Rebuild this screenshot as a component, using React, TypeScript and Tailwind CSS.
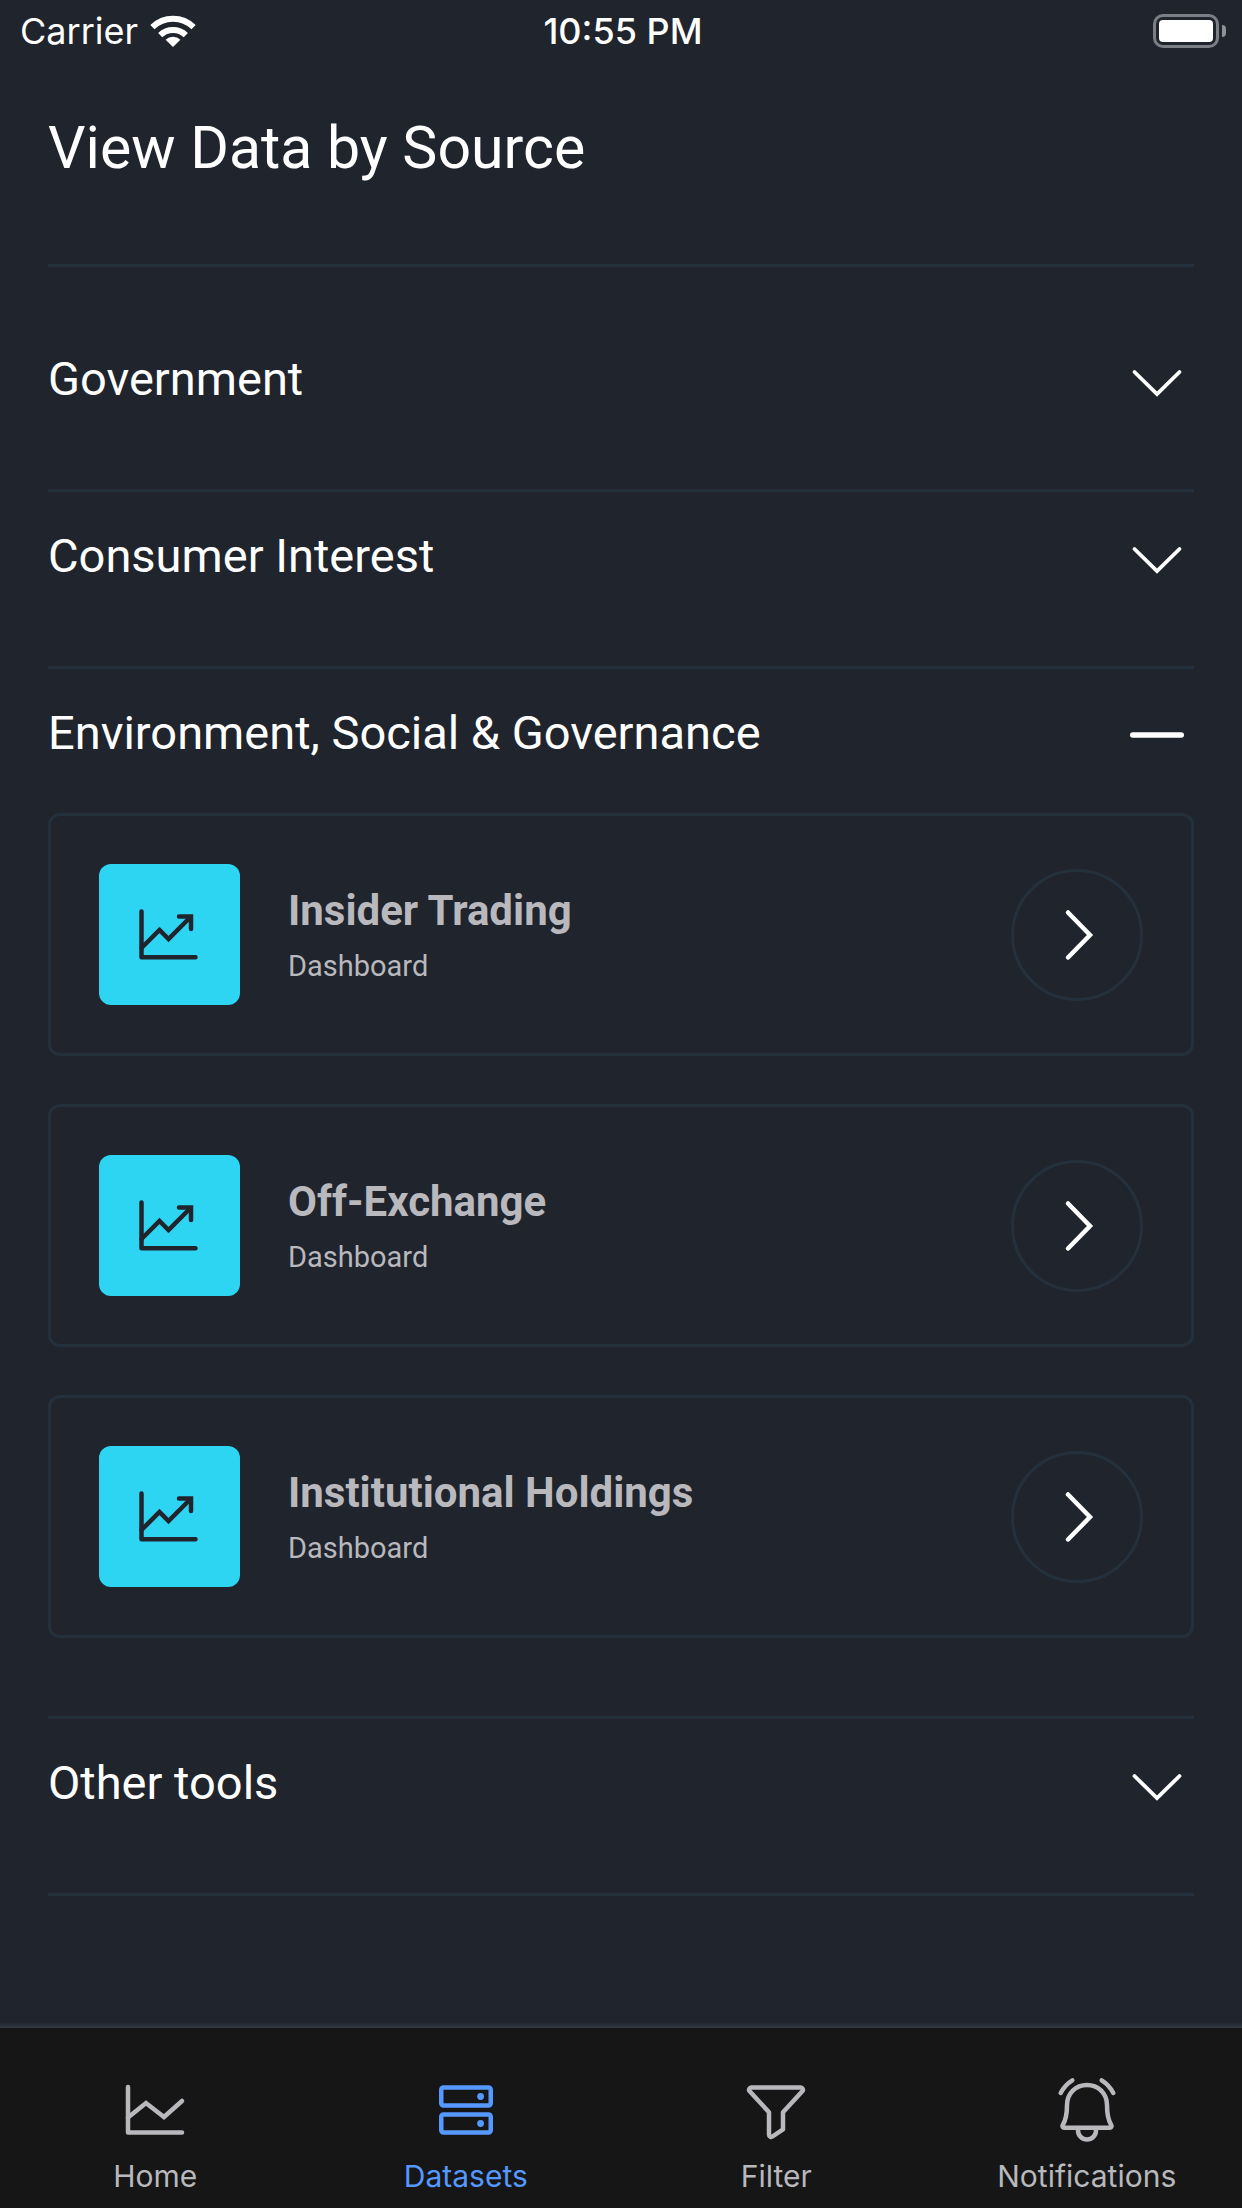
import React, { useState } from "react";
import clsx from "clsx";

type Source = {
	title: string;
	items: string[];
};

const sources: Source[] = [
	{ title: "Government", items: [] },
	{ title: "Consumer Interest", items: [] },
	{
		title: "Environment, Social & Governance",
		items: ["Insider Trading", "Off-Exchange", "Institutional Holdings"],
	},
	{ title: "Other tools", items: [] },
];

function Icon({
	children,
	className,
}: {
	children: React.ReactNode;
	className?: string;
}) {
	return (
		<svg
			viewBox="0 0 72 72"
			className={clsx("size-[72px] shrink-0", className)}
			fill="none"
			stroke="currentColor"
			strokeWidth={4.5}
			strokeLinecap="round"
			strokeLinejoin="round"
			aria-hidden="true"
		>
			{children}
		</svg>
	);
}

const tabs = [
	{
		label: "Home",
		icon: (
			<Icon>
				<path d="M9 13V58.5H63" />
				<path d="M9 43.5L27 29L45 43L63 27" strokeLinejoin="miter" />
			</Icon>
		),
	},
	{
		label: "Datasets",
		icon: (
			<Icon>
				<rect x="11.25" y="13.5" width="49.5" height="18" rx="2.25" />
				<rect x="11.25" y="40.5" width="49.5" height="18" rx="2.25" />
				<circle cx="50.6" cy="22.5" r="3.4" fill="currentColor" stroke="none" />
				<circle cx="50.6" cy="49.5" r="3.4" fill="currentColor" stroke="none" />
			</Icon>
		),
	},
	{
		label: "Filter",
		icon: (
			<Icon>
				<path d="M11.4 13.5H60.6A2.25 2.25 0 0 1 62.3 17.3L43 38.2V55.4L32.5 62.5A2.25 2.25 0 0 1 29 60.7V38.2L9.7 17.3A2.25 2.25 0 0 1 11.4 13.5Z" />
			</Icon>
		),
	},
	{
		label: "Notifications",
		icon: (
			<Icon>
				<path d="M16 31C16 19.5 24.8 11 36 11S56 19.5 56 31C56 42 58 47.5 60.3 51.2A1.7 1.7 0 0 1 58.8 53.8H13.2A1.7 1.7 0 0 1 11.7 51.2C14 47.5 16 42 16 31Z" />
				<path d="M27 54V56.5A9 9 0 0 0 45 56.5V54" />
				<path d="M9.7 19C12.3 13.8 16.3 9.4 21.3 6.3" />
				<path d="M62.3 19C59.7 13.8 55.7 9.4 50.7 6.3" />
			</Icon>
		),
	},
];

function StatusBar() {
	return (
		<div className="grid h-[60px] grid-cols-3 items-center pt-0.5 pr-4 pl-5 font-['Inter',sans-serif] text-[36px] leading-[58px]">
			<div className="flex items-center gap-3">
				<span>Carrier</span>
				<svg
					viewBox="0 0 46 32"
					className="h-8 w-[46px]"
					fill="none"
					stroke="currentColor"
					strokeWidth={6}
					aria-hidden="true"
				>
					<path d="M2.4 12.2A29.5 29.5 0 0 1 43.6 12.2" />
					<path d="M10.2 20.2A18.5 18.5 0 0 1 35.8 20.2" />
					<path
						d="M23 32L15.6 24.8A10.6 10.6 0 0 1 30.4 24.8Z"
						fill="currentColor"
						stroke="none"
					/>
				</svg>
			</div>
			<span className="text-center font-medium">10:55 PM</span>
			<div className="flex items-center justify-end gap-[3px]">
				<div className="h-[34px] w-[66px] rounded-[10px] border-[3px] border-[#7b7e84] p-[3px]">
					<div className="h-full rounded-[4px] bg-white" />
				</div>
				<div className="h-3 w-1 rounded-r-full bg-[#8f9196]" />
			</div>
		</div>
	);
}

function SourceCard({ name }: { name: string }) {
	return (
		<a
			href="#dashboard"
			className="flex items-center gap-12 rounded-xl border-[3px] border-[#24303c] p-12 text-[#b8b8bd]"
		>
			<div className="flex size-[141px] items-center justify-center rounded-xl bg-[#2dd5f3] text-[#20242d]">
				<Icon>
					<path d="M7.5 12.5V58.3H61.5" />
					<path d="M7.5 49L25.5 31L34.5 40L56 18.5" strokeLinejoin="miter" />
					<path d="M45 17.5H57V30" strokeLinejoin="miter" />
				</Icon>
			</div>
			<div className="flex flex-1 flex-col gap-3">
				<h3 className="text-[42px] leading-[50px] font-bold">{name}</h3>
				<p className="text-[29px] leading-9">Dashboard</p>
			</div>
			<div className="flex size-[132px] items-center justify-center rounded-full border-[3px] border-[#24303c] text-white">
				<Icon>
					<path d="M27 13.5L49 36L27 58.5" strokeLinejoin="miter" />
				</Icon>
			</div>
		</a>
	);
}

function SourceSection({ source, open, onToggle }: {
	source: Source;
	open: boolean;
	onToggle: () => void;
}) {
	return (
		<section className="border-b-[3px] border-[#24303c] pt-9 pb-[78px]">
			<h2>
				<button
					type="button"
					aria-expanded={open}
					onClick={onToggle}
					className="flex h-[60px] w-full items-start justify-between text-left text-[47px] leading-[56px]"
				>
					{source.title}
					<svg
						viewBox="0 0 60 60"
						className="mr-[7px] size-[60px] shrink-0"
						fill="none"
						stroke="currentColor"
						strokeLinecap="round"
						aria-hidden="true"
					>
						{open ? (
							<path d="M5.7 30H54.3" strokeWidth={5.4} />
						) : (
							<path d="M7.5 21L30 43L52.5 21" strokeWidth={3.8} />
						)}
					</svg>
				</button>
			</h2>
			{open && source.items.length > 0 && (
				<div className="mt-12 flex flex-col gap-12">
					{source.items.map((name) => (
						<SourceCard key={name} name={name} />
					))}
				</div>
			)}
		</section>
	);
}

export default function App() {
	const [openSource, setOpenSource] = useState(
		"Environment, Social & Governance",
	);
	const [activeTab, setActiveTab] = useState("Datasets");

	return (
		<div className="flex min-h-screen flex-col bg-[#20242d] font-['Roboto',sans-serif] text-white">
			<StatusBar />
			<main className="flex-1 px-12 pb-12">
				<h1 className="pt-[52px] pb-20 text-[59px] leading-[72px]">
					View Data by Source
				</h1>
				<div className="border-t-[3px] border-[#24303c] pt-12">
					{sources.map((source) => (
						<SourceSection
							key={source.title}
							source={source}
							open={openSource === source.title}
							onToggle={() =>
								setOpenSource(openSource === source.title ? "" : source.title)
							}
						/>
					))}
				</div>
			</main>

			<div className="h-1.5 bg-linear-to-b from-[#20242d] to-[#353943]" />
			<nav className="grid h-[180px] grid-cols-4 bg-[#161616] pt-[46px] font-['Inter',sans-serif]">
				{tabs.map((tab) => (
					<a
						key={tab.label}
						href={`#${tab.label.toLowerCase()}`}
						onClick={() => setActiveTab(tab.label)}
						aria-current={activeTab === tab.label ? "page" : undefined}
						className={clsx(
							"flex flex-col items-center gap-3 text-[30px] leading-9",
							activeTab === tab.label ? "text-[#5598ff]" : "text-[#b8b8bd]",
						)}
					>
						{tab.icon}
						{tab.label}
					</a>
				))}
			</nav>
		</div>
	);
}
